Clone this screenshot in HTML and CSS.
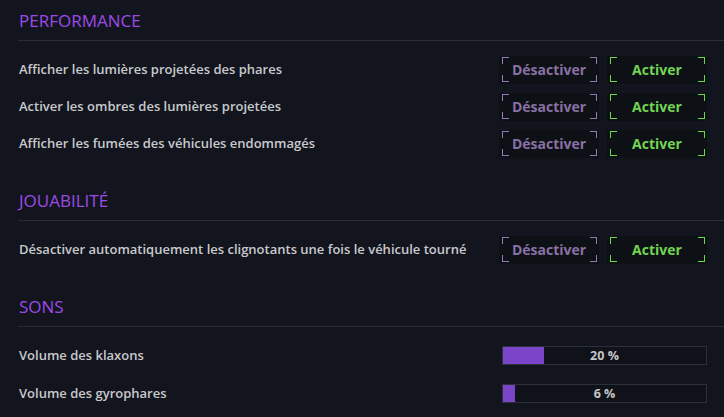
FILE: index.html
```html
<!DOCTYPE html>
<html lang="fr">

<head>
    <meta charset="utf-8">
    <meta name="viewport" content="width=device-width, initial-scale=1.0">
    <title>Options</title>
    <link rel="stylesheet" href="styles.css">
</head>

<body>
    <!-- Performance -->
    <div class="section">
        <h2 class="titre">PERFORMANCE</h2>
        <div class="liste">
            <div class="ligne">
                <span class="label">Afficher les lumières projetées des phares</span>
                <div class="choix">
                    <span class="btn off">Désactiver</span>
                    <span class="btn on">Activer</span>
                </div>
            </div>
            <div class="ligne">
                <span class="label">Activer les ombres des lumières projetées</span>
                <div class="choix">
                    <span class="btn off">Désactiver</span>
                    <span class="btn on">Activer</span>
                </div>
            </div>
            <div class="ligne">
                <span class="label">Afficher les fumées des véhicules endommagés</span>
                <div class="choix">
                    <span class="btn off">Désactiver</span>
                    <span class="btn on">Activer</span>
                </div>
            </div>
        </div>
    </div>

    <!-- Jouabilité -->
    <div class="section">
        <h2 class="titre">JOUABILITÉ</h2>
        <div class="liste">
            <div class="ligne">
                <span class="label">Désactiver automatiquement les clignotants une fois le véhicule tourné</span>
                <div class="choix">
                    <span class="btn off">Désactiver</span>
                    <span class="btn on">Activer</span>
                </div>
            </div>
        </div>
    </div>

    <!-- Sons -->
    <div class="section">
        <h2 class="titre">SONS</h2>
        <div class="liste sons">
            <div class="ligne-son">
                <span class="label">Volume des klaxons</span>
                <div class="barre">
                    <div class="rempli" style="width: 20%"></div>
                    <span class="valeur">20 %</span>
                </div>
            </div>
            <div class="ligne-son">
                <span class="label">Volume des gyrophares</span>
                <div class="barre">
                    <div class="rempli" style="width: 6%"></div>
                    <span class="valeur">6 %</span>
                </div>
            </div>
        </div>
    </div>
</body>
</html>
```

FILE: styles.css
```css
/* Page d'options */
body {
    margin: 0;
    background: #12151d;
    font-family: "Open Sans", "Noto Sans", sans-serif;
    color: #c9c9cd;
}

.section {
    padding-left: 18px;
    margin-bottom: 22px;
}

.titre {
    margin: 0;
    padding: 11px 0 9px 1px;
    height: 20px;
    line-height: 20px;
    font-size: 17px;
    font-weight: 400;
    color: #9d4ae8;
    border-bottom: 1px solid #2a2d35;
}

.liste {
    padding: 15px 17px 0 1px;
    display: flex;
    flex-direction: column;
    gap: 9px;
}

.ligne {
    display: flex;
    align-items: center;
    height: 28px;
}

.label {
    flex: 1;
    font-size: 13px;
    font-weight: 600;
    color: #c9c9cd;
    margin-top: -2px;
}

.choix {
    display: flex;
    gap: 8px;
}

.btn {
    --c: #9478b4;
    width: 100px;
    height: 28px;
    line-height: 28px;
    text-align: center;
    font-size: 14px;
    font-weight: 700;
    background:
        linear-gradient(var(--c), var(--c)) left 3px top 1px / 7px 1px no-repeat,
        linear-gradient(var(--c), var(--c)) left 3px top 1px / 1px 7px no-repeat,
        linear-gradient(var(--c), var(--c)) right 2px top 1px / 7px 1px no-repeat,
        linear-gradient(var(--c), var(--c)) right 2px top 1px / 1px 7px no-repeat,
        linear-gradient(var(--c), var(--c)) left 3px bottom 2px / 7px 1px no-repeat,
        linear-gradient(var(--c), var(--c)) left 3px bottom 2px / 1px 7px no-repeat,
        linear-gradient(var(--c), var(--c)) right 2px bottom 2px / 7px 1px no-repeat,
        linear-gradient(var(--c), var(--c)) right 2px bottom 2px / 1px 7px no-repeat,
        #0d1015;
}

.off {
    --c: #9478b4;
    color: #8a70a4;
}

.on {
    --c: #66dc44;
    color: #72d452;
}

/* sliders */
.sons {
    padding-top: 19px;
    gap: 19px;
}

.ligne-son {
    display: flex;
    align-items: center;
    height: 19px;
}

.barre {
    position: relative;
    width: 203px;
    height: 17px;
    border: 1px solid #2c3039;
    background: #0f1218;
    display: flex;
}

.rempli {
    height: 100%;
    background: #7a45c8;
}

.valeur {
    position: absolute;
    left: 0;
    right: 0;
    top: 0;
    line-height: 17px;
    text-align: center;
    font-size: 12.5px;
    font-weight: 700;
    color: #c6c6c9;
}
```
